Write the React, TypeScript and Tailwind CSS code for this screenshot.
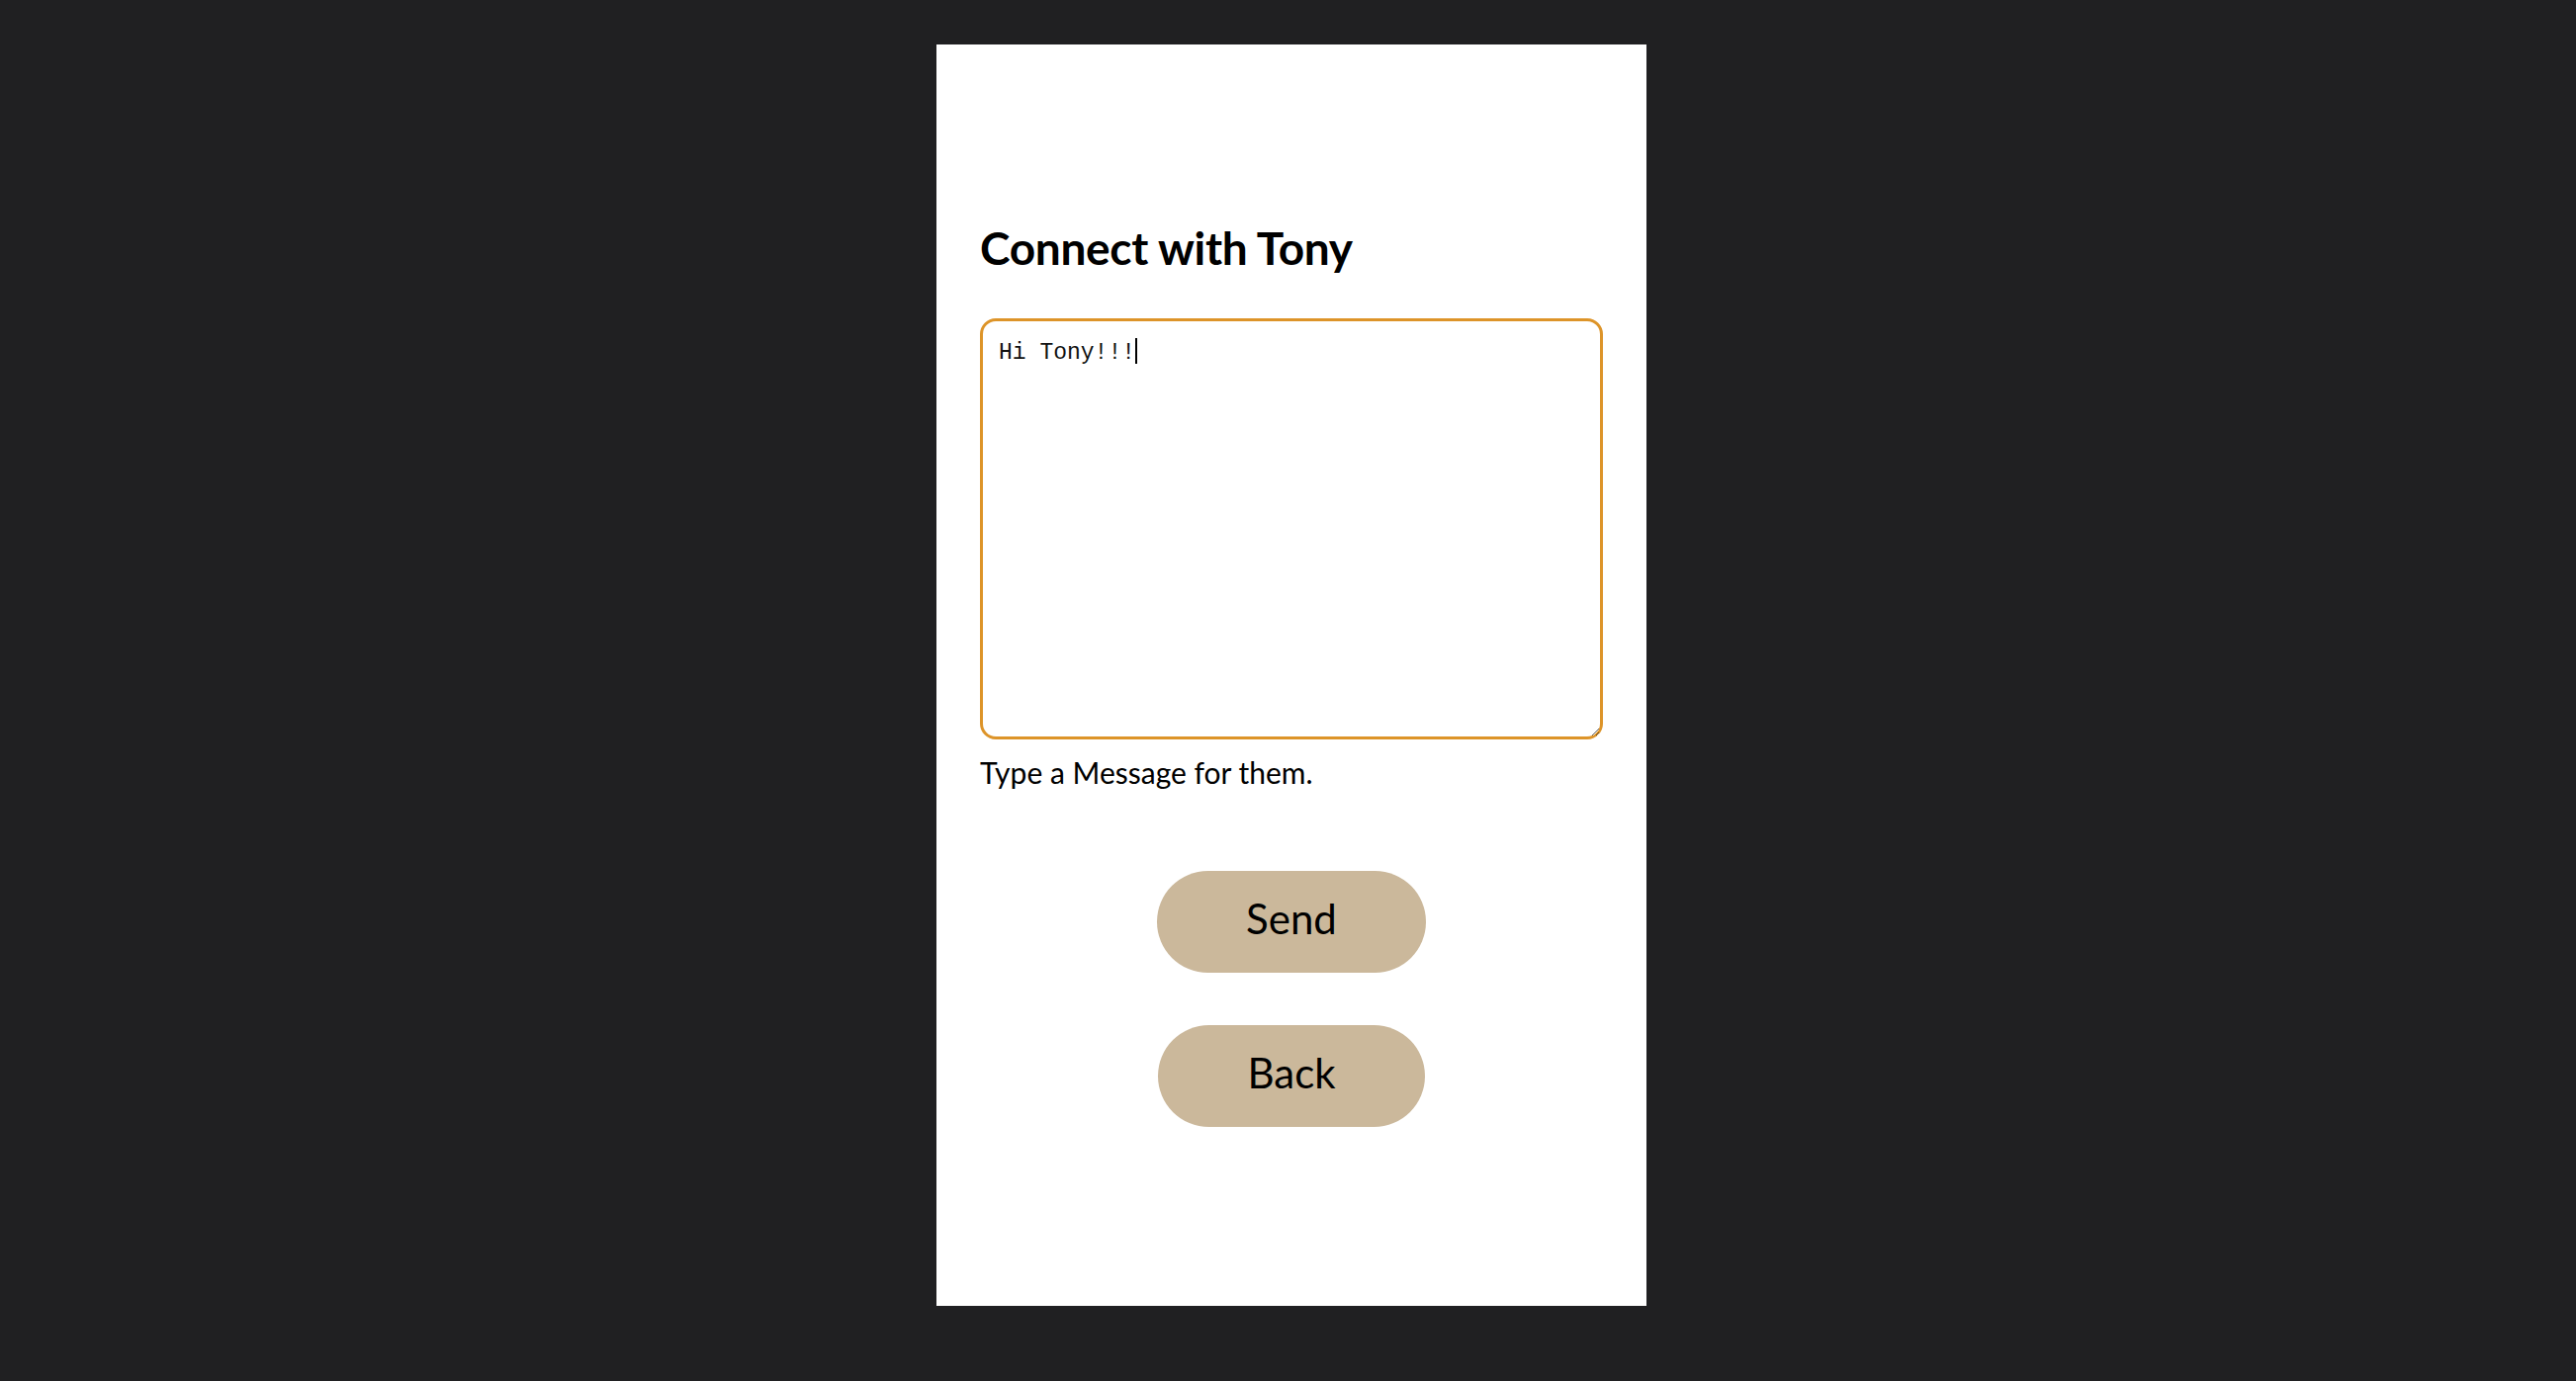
import { useEffect, useRef, useState } from "react";

export default function App() {
  const [message, setMessage] = useState("Hi Tony!!!");
  const ref = useRef<HTMLTextAreaElement>(null);

  useEffect(() => {
    const el = ref.current;
    if (!el) return;
    el.focus();
    el.setSelectionRange(el.value.length, el.value.length);
  }, []);

  return (
    <div className="min-h-screen w-full bg-[#202022] flex justify-center pt-[45px] pl-[7px] font-['Lato',sans-serif] text-black">
      <div className="w-[718px] h-[1276px] bg-white px-[44px] pt-[178px] flex flex-col">
        <h1 className="text-[46px] font-bold leading-[1.2] tracking-[-0.3px]">Connect with Tony</h1>

        {/* textarea with caret drawn over it */}
        <div className="relative mt-[44px]">
          <textarea
            ref={ref}
            value={message}
            onChange={(e) => setMessage(e.target.value)}
            className="block w-full h-[426px] border-[3px] border-[#dd9429] rounded-[16px] px-[16px] pt-[19px] text-[23px] leading-[1.133] font-['Liberation_Mono','Courier_New',monospace] text-[#111] outline-none resize caret-transparent"
          />
          <span
            className="absolute top-[20px] h-[26px] w-[1.5px] bg-black text-[23px] font-['Liberation_Mono','Courier_New',monospace]"
            style={{ left: `calc(19px + ${message.length}ch)` }}
          />
        </div>

        <p className="mt-[15px] text-[30px] leading-[1.2]">Type a Message for them.</p>

        <div className="mt-[82px] flex flex-col items-center gap-[53px]">
          <button className="h-[103px] px-[90px] pb-[6px] rounded-full bg-[#cbb89b] text-[42px] leading-[1.2] flex items-center">
            Send
          </button>
          <button className="h-[103px] px-[90px] pb-[6px] rounded-full bg-[#cbb89b] text-[42px] leading-[1.2] flex items-center">
            Back
          </button>
        </div>
      </div>
    </div>
  );
}
